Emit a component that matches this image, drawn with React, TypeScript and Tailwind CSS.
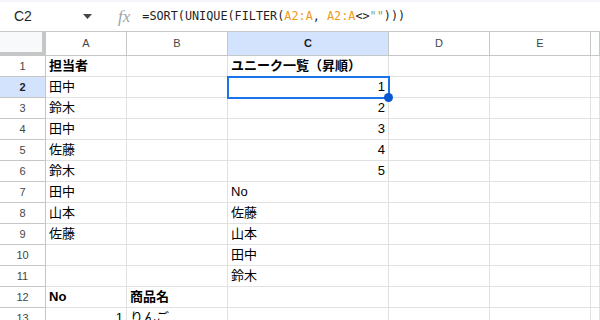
import React from "react";

type Row = {
  a?: string;
  ab?: boolean;
  ar?: boolean;
  b?: string;
  bb?: boolean;
  c?: string;
  cb?: boolean;
  cr?: boolean;
};

const rows: Row[] = [
  { a: "担当者", ab: true, c: "ユニーク一覧（昇順）", cb: true },
  { a: "田中", c: "1", cr: true },
  { a: "鈴木", c: "2", cr: true },
  { a: "田中", c: "3", cr: true },
  { a: "佐藤", c: "4", cr: true },
  { a: "鈴木", c: "5", cr: true },
  { a: "田中", c: "No" },
  { a: "山本", c: "佐藤" },
  { a: "佐藤", c: "山本" },
  { c: "田中" },
  { c: "鈴木" },
  { a: "No", ab: true, b: "商品名", bb: true },
  { a: "1", ar: true, b: "りんご" },
];

const cols = ["A", "B", "C", "D", "E", ""];

const Cell = ({ text, bold, right }: { text?: string; bold?: boolean; right?: boolean }) => (
  <div
    className={`h-[21px] border-r border-b border-[#e1e1e1] flex items-center px-[3px] overflow-hidden whitespace-nowrap text-[13px] text-[#000] ${
      right ? "justify-end" : ""
    } ${bold ? "font-bold" : ""}`}
  >
    {text}
  </div>
);

const App: React.FC = () => {
  return (
    <div className="w-[600px] h-[320px] overflow-hidden bg-white font-['Liberation_Sans','Noto_Sans_CJK_JP',sans-serif]">
      <div className="h-[2px] bg-[#f3f5f8]" />

      {/* 数式バー */}
      <div className="h-[30px] flex items-center border-b border-[#c7c7c7]">
        <div className="w-[105px] flex items-center pl-[14px] pr-[10px] justify-between">
          <span className="text-[14px] text-[#1f1f1f]">C2</span>
          <svg width="9" height="5" viewBox="0 0 9 5" className="mr-[3px]">
            <path d="M0 0h9L4.5 5z" fill="#444746" />
          </svg>
        </div>
        <span className="ml-[13px] text-[17px] italic text-[#a0a4a8] font-['Liberation_Serif',serif] leading-none">
          fx
        </span>
        <div className="ml-[12px] text-[11.8px] font-['DejaVu_Sans_Mono',monospace] text-[#1f1f1f] whitespace-nowrap">
          =SORT(UNIQUE(FILTER(<span className="text-[#f09a1a]">A2:A</span>,{" "}
          <span className="text-[#f09a1a]">A2:A</span>&lt;&gt;
          <span className="text-[#7aa87e]">""</span>)))
        </div>
      </div>

      {/* グリッド */}
      <div className="relative grid grid-cols-[46px_81px_101px_161px_101px_101px_1fr]">
        {/* 列ヘッダー */}
        <div className="h-[24px] bg-[#f8f9fa] border-r-4 border-b-4 border-[#c4c7c5]" />
        {cols.map((c, i) => (
          <div
            key={i}
            className={`h-[24px] border-r border-b border-[#c4c7c5] flex items-center justify-center text-[11px] ${
              c === "C" ? "bg-[#d3e3fd] font-bold text-[#1f1f1f]" : "text-[#444746]"
            }`}
          >
            {c}
          </div>
        ))}

        {rows.map((r, i) => (
          <React.Fragment key={i}>
            <div
              className={`h-[21px] border-r border-b border-[#c4c7c5] flex items-center justify-center text-[11px] ${
                i === 1 ? "bg-[#d3e3fd] font-bold text-[#1f1f1f]" : "text-[#444746]"
              }`}
            >
              {i + 1}
            </div>
            <Cell text={r.a} bold={r.ab} right={r.ar} />
            <Cell text={r.b} bold={r.bb} />
            <Cell text={r.c} bold={r.cb} right={r.cr} />
            <Cell />
            <Cell />
            <Cell />
          </React.Fragment>
        ))}

        {/* 選択セル */}
        <div className="absolute left-[227px] top-[44px] w-[163px] h-[23px] border-2 border-[#1a73e8] pointer-events-none" />
        <div className="absolute left-[384px] top-[61px] w-[9px] h-[9px] rounded-full bg-[#0b57d0]" />
      </div>
    </div>
  );
};

export default App;
